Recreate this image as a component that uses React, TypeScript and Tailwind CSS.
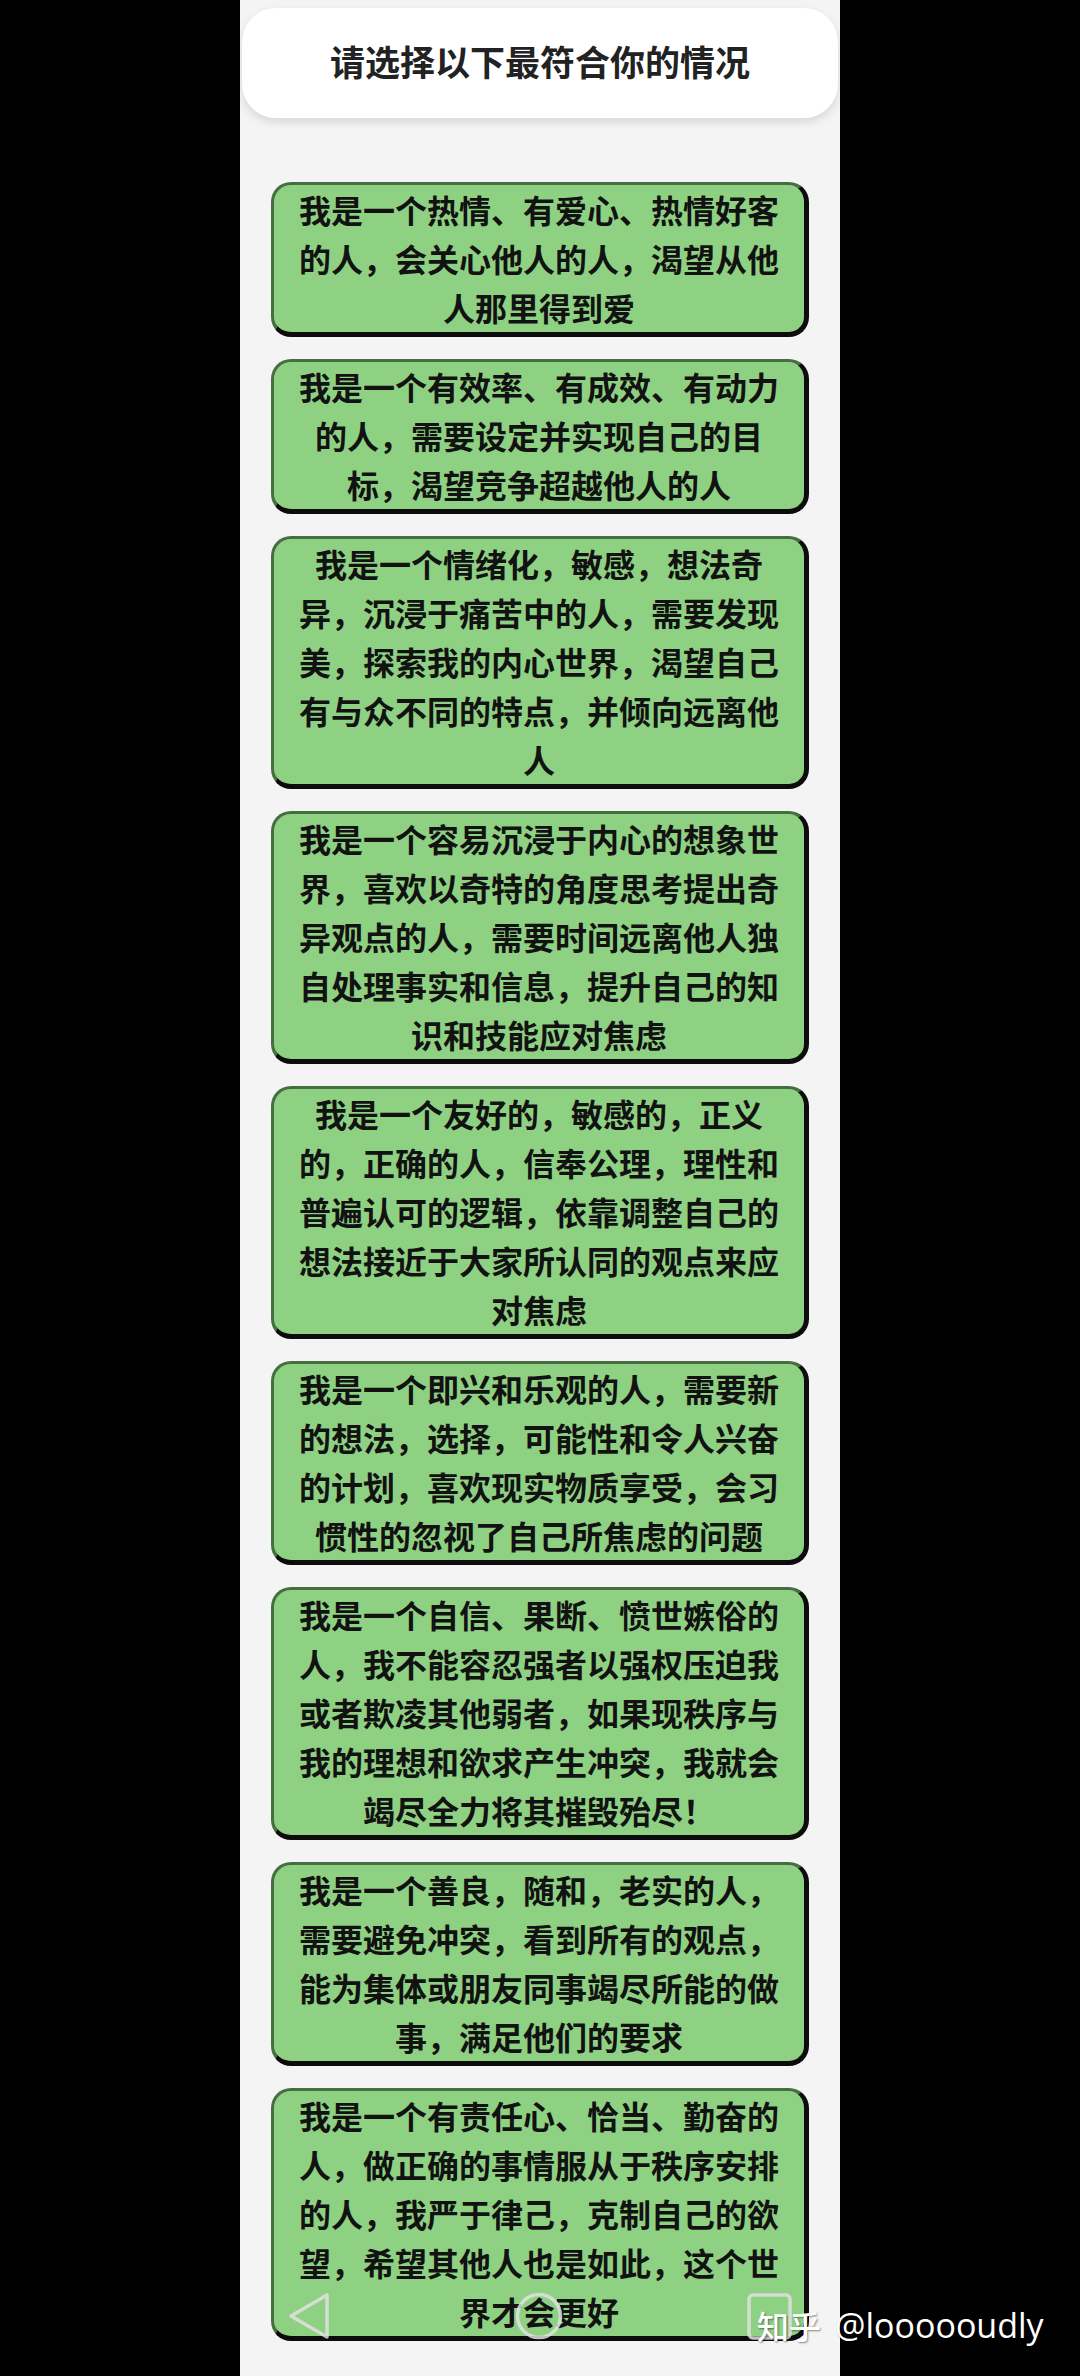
import React from "react";

const cards: string[][] = [
  ["我是一个热情、有爱心、热情好客", "的人，会关心他人的人，渴望从他", "人那里得到爱"],
  ["我是一个有效率、有成效、有动力", "的人，需要设定并实现自己的目", "标，渴望竞争超越他人的人"],
  ["我是一个情绪化，敏感，想法奇", "异，沉浸于痛苦中的人，需要发现", "美，探索我的内心世界，渴望自己", "有与众不同的特点，并倾向远离他", "人"],
  ["我是一个容易沉浸于内心的想象世", "界，喜欢以奇特的角度思考提出奇", "异观点的人，需要时间远离他人独", "自处理事实和信息，提升自己的知", "识和技能应对焦虑"],
  ["我是一个友好的，敏感的，正义", "的，正确的人，信奉公理，理性和", "普遍认可的逻辑，依靠调整自己的", "想法接近于大家所认同的观点来应", "对焦虑"],
  ["我是一个即兴和乐观的人，需要新", "的想法，选择，可能性和令人兴奋", "的计划，喜欢现实物质享受，会习", "惯性的忽视了自己所焦虑的问题"],
  ["我是一个自信、果断、愤世嫉俗的", "人，我不能容忍强者以强权压迫我", "或者欺凌其他弱者，如果现秩序与", "我的理想和欲求产生冲突，我就会", "竭尽全力将其摧毁殆尽！"],
  ["我是一个善良，随和，老实的人，", "需要避免冲突，看到所有的观点，", "能为集体或朋友同事竭尽所能的做", "事，满足他们的要求"],
  ["我是一个有责任心、恰当、勤奋的", "人，做正确的事情服从于秩序安排", "的人，我严于律己，克制自己的欲", "望，希望其他人也是如此，这个世", "界才会更好"],
];

const font = { fontFamily: '"Noto Sans CJK SC", "Noto Sans", sans-serif' };

export default function App() {
  return (
    <div className="relative w-[1080px] h-[2376px] bg-black flex justify-center overflow-hidden" style={font}>
      <div className="w-[600px] h-full bg-[#f4f4f4] flex flex-col">
        <div className="mx-[2px] mt-[8px] h-[110px] rounded-[34px] bg-white shadow-[0_4px_10px_rgba(0,0,0,0.12)] flex items-center justify-center pb-[5px]">
          <span className="text-[35px] font-bold text-[#222] leading-none">请选择以下最符合你的情况</span>
        </div>
        <div className="mt-[64px] px-[31px] flex flex-col gap-[22px]">
          {cards.map((lines, i) => (
            <div
              key={i}
              className="rounded-[20px] bg-[#8fd183] border-t-[3px] border-l-[3px] border-r-[5px] border-b-[5px] border-t-[#456f40] border-l-[#456f40] border-r-[#0c0c0c] border-b-[#0c0c0c] flex flex-col items-center"
            >
              {lines.map((l, j) => (
                <div key={j} className="whitespace-nowrap text-[32px] leading-[49px] font-bold text-[#121212]">
                  {l}
                </div>
              ))}
            </div>
          ))}
        </div>
      </div>

      {/* navigation bar overlay */}
      <svg className="absolute left-[286px] top-[2291px]" width="46" height="50" viewBox="0 0 46 50">
        <path d="M41 4 L41 46 L5 25 Z" fill="none" stroke="rgba(225,225,225,0.85)" strokeWidth="3.5" strokeLinejoin="round" />
      </svg>
      <svg className="absolute left-[514px] top-[2291px]" width="50" height="50" viewBox="0 0 50 50">
        <circle cx="25" cy="25" r="21.5" fill="none" stroke="rgba(225,225,225,0.85)" strokeWidth="3.5" />
      </svg>
      <svg className="absolute left-[746px] top-[2292px]" width="48" height="50" viewBox="0 0 48 50">
        <rect x="3" y="3" width="41" height="43" rx="4" fill="none" stroke="rgba(225,225,225,0.85)" strokeWidth="3.5" />
      </svg>

      {/* watermark */}
      <div className="absolute left-[757px] top-[2304px] flex items-center gap-[14px] text-white leading-[42px] [text-shadow:1px_1px_2px_rgba(0,0,0,0.45)]">
        <span className="text-[32px] font-medium">知乎</span>
        <span className="text-[34px]" style={{ fontFamily: '"Open Sans", "Noto Sans", sans-serif' }}>@loooooudly</span>
      </div>
    </div>
  );
}
